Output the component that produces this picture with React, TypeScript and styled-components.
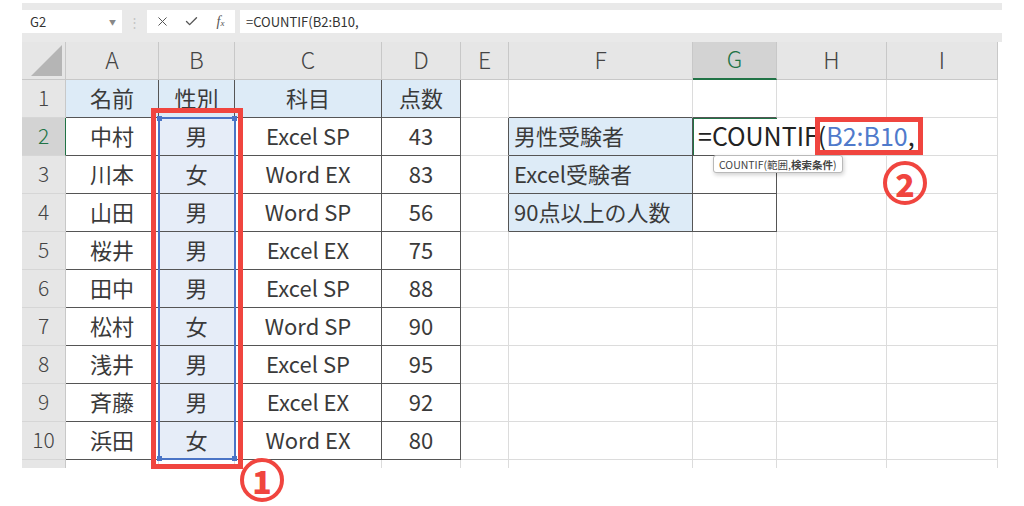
import React from "react"
import styled, { createGlobalStyle } from "styled-components"
import { X, Check } from "lucide-react"

const GlobalStyle = createGlobalStyle`
  body {
    margin: 0;
    background: #fff;
    font-family: "Noto Sans CJK JP", "Noto Sans", sans-serif;
  }
`

const COLS = [44, 93, 76, 147, 79, 48, 184, 84, 110, 111]
const LETTERS = ["A", "B", "C", "D", "E", "F", "G", "H", "I"]
const BLUE = "#ddebf7"
const SELECT = "#e6edf8"
const GREEN = "#217346"
const RED = "#f0453f"

// data[row][col], col 1 = A
const data: Record<number, Record<number, string>> = {
  1: { 1: "名前", 2: "性別", 3: "科目", 4: "点数" },
  2: { 1: "中村", 2: "男", 3: "Excel SP", 4: "43", 6: "男性受験者" },
  3: { 1: "川本", 2: "女", 3: "Word EX", 4: "83", 6: "Excel受験者" },
  4: { 1: "山田", 2: "男", 3: "Word SP", 4: "56", 6: "90点以上の人数" },
  5: { 1: "桜井", 2: "男", 3: "Excel EX", 4: "75" },
  6: { 1: "田中", 2: "男", 3: "Excel SP", 4: "88" },
  7: { 1: "松村", 2: "女", 3: "Word SP", 4: "90" },
  8: { 1: "浅井", 2: "男", 3: "Excel SP", 4: "95" },
  9: { 1: "斉藤", 2: "男", 3: "Excel EX", 4: "92" },
  10: { 1: "浜田", 2: "女", 3: "Word EX", 4: "80" },
}

const inTable = (r: number, c: number) =>
  (r >= 1 && r <= 10 && c >= 1 && c <= 4) || (r >= 2 && r <= 4 && c >= 6 && c <= 7)

const fillOf = (r: number, c: number) => {
  if (r === 1 && c >= 1 && c <= 4) return BLUE
  if (c === 6 && r >= 2 && r <= 4) return BLUE
  if (c === 2 && r >= 2 && r <= 10) return SELECT
  return "transparent"
}

const Page = styled.div`
  padding: 3px 0 0 22px;
  width: 1002px;
  min-height: 506px;
  box-sizing: border-box;
`

const FormulaBar = styled.div`
  display: flex;
  align-items: flex-start;
  width: 980px;
  height: 39px;
  padding-top: 7px;
  box-sizing: border-box;
  background: #e9e9e9;
`

const NameBox = styled.div`
  display: flex;
  align-items: center;
  justify-content: space-between;
  width: 100px;
  height: 23px;
  padding: 0 6px 0 8px;
  box-sizing: border-box;
  background: #fff;
  font-size: 13px;
  color: #333;
`

const Caret = styled.span`
  font-size: 7px;
  color: #888;
`

const Dots = styled.div`
  width: 25px;
  height: 23px;
  display: flex;
  align-items: center;
  justify-content: center;
  color: #c4c4c4;
  font-size: 13px;
`

const FuncBox = styled.div`
  display: flex;
  width: 88px;
  height: 23px;
  padding-left: 1px;
  box-sizing: border-box;
  background: #fff;
`

const IconSlot = styled.div`
  width: 29px;
  display: flex;
  align-items: center;
  justify-content: center;
  color: #555;
`

const Fx = styled.span`
  font-family: "Liberation Serif", serif;
  font-style: italic;
  font-size: 14px;
  color: #555;

  small {
    font-size: 9px;
  }
`

const FormulaInput = styled.div`
  flex: 1;
  margin-left: 5px;
  height: 23px;
  display: flex;
  align-items: center;
  padding-left: 6px;
  background: #fff;
  font-size: 13px;
  color: #333;
`

const Sheet = styled.div`
  position: relative;
  display: grid;
  width: 976px;
  grid-template-columns: ${COLS.map((w) => `${w}px`).join(" ")};
  grid-template-rows: 38px repeat(10, 38px) 8px;
  background: #fff;
`

const Corner = styled.div`
  position: relative;
  background: #e6e6e6;
  border-right: 1px solid #c8c8c8;
  border-bottom: 1px solid #c8c8c8;

  &::after {
    content: "";
    position: absolute;
    right: 3px;
    bottom: 3px;
    width: 0;
    height: 0;
    border-left: 31px solid transparent;
    border-bottom: 31px solid #b5b5b5;
  }
`

const ColHeader = styled.div<{ $active?: boolean }>`
  display: flex;
  align-items: center;
  justify-content: center;
  box-sizing: border-box;
  padding-bottom: 4px;
  background: ${(p) => (p.$active ? "#d3d3d3" : "#e6e6e6")};
  color: ${(p) => (p.$active ? GREEN : "#444")};
  border-right: 1px solid #c8c8c8;
  border-bottom: ${(p) => (p.$active ? `2px solid ${GREEN}` : "1px solid #c8c8c8")};
  font-size: 23px;
  font-weight: 300;
`

const RowHeader = styled.div<{ $active?: boolean; $last?: boolean }>`
  display: flex;
  align-items: center;
  justify-content: center;
  box-sizing: border-box;
  padding-bottom: ${(p) => (p.$last ? "0" : "3px")};
  background: ${(p) => (p.$active ? "#d3d3d3" : "#e6e6e6")};
  color: ${(p) => (p.$active ? GREEN : "#444")};
  border-right: ${(p) => (p.$active ? `1px solid ${GREEN}` : "1px solid #c8c8c8")};
  border-bottom: ${(p) => (p.$last ? "none" : "1px solid #d6d6d6")};
  font-size: 21px;
  font-weight: 300;
`

const Cell = styled.div<{
  $fill: string
  $right: string
  $bottom: string
  $left?: boolean
  $active?: boolean
}>`
  display: flex;
  align-items: center;
  justify-content: ${(p) => (p.$left ? "flex-start" : "center")};
  padding-left: ${(p) => (p.$left ? "5px" : "0")};
  padding-bottom: 4px;
  box-sizing: border-box;
  background: ${(p) => p.$fill};
  border-right: ${(p) => (p.$right === "none" ? "none" : `1px solid ${p.$right}`)};
  border-bottom: ${(p) => (p.$bottom === "none" ? "none" : `1px solid ${p.$bottom}`)};
  box-shadow: ${(p) => (p.$active ? `inset 1px 1px 0 ${GREEN}` : "none")};
  font-size: 22px;
  color: #3a3a3a;
  white-space: nowrap;
  overflow: visible;
  z-index: ${(p) => (p.$active ? 1 : 0)};
`

const Formula = styled.span`
  font-size: 25px;
  color: #222;
`

const Ref = styled.span`
  color: #4f7acb;
`

const Frame = styled.div<{ $x: number; $y: number; $w: number; $h: number }>`
  position: absolute;
  left: ${(p) => p.$x}px;
  top: ${(p) => p.$y}px;
  width: ${(p) => p.$w}px;
  height: ${(p) => p.$h}px;
  box-sizing: border-box;
  pointer-events: none;
  z-index: 3;
`

const RedFrame = styled(Frame)`
  border: 5px solid ${RED};
`

const Selection = styled(Frame)`
  border: 2px solid #4a74c6;
  z-index: 2;
`

const Handle = styled.span<{ $corner: "tl" | "tr" | "bl" | "br" }>`
  position: absolute;
  width: 5px;
  height: 5px;
  background: #4a74c6;
  ${(p) => (p.$corner[0] === "t" ? "top: -3px;" : "bottom: -3px;")}
  ${(p) => (p.$corner[1] === "l" ? "left: -3px;" : "right: -3px;")}
`

const Tooltip = styled.div`
  position: absolute;
  left: 691px;
  top: 113px;
  height: 16px;
  padding: 0 5px;
  display: flex;
  align-items: center;
  background: #fff;
  border: 1px solid #b9b9b9;
  border-radius: 3px;
  box-shadow: 1px 2px 4px rgba(0, 0, 0, 0.18);
  font-size: 10.5px;
  color: #444;
  white-space: nowrap;
  z-index: 2;

  b {
    font-weight: 700;
  }
`

const Badge = styled.span<{ $x: number; $y: number }>`
  position: absolute;
  left: ${(p) => p.$x}px;
  top: ${(p) => p.$y}px;
  transform: translate(-50%, -50%);
  width: 44px;
  height: 44px;
  box-sizing: border-box;
  border: 4.5px solid ${RED};
  border-radius: 50%;
  display: flex;
  align-items: center;
  justify-content: center;
  color: ${RED};
  font-size: 32px;
  font-weight: 900;
  line-height: 1;
  z-index: 3;
`

function renderCell(r: number, c: number) {
  const text = data[r]?.[c] ?? ""
  const last = r === 11
  let right = inTable(r, c) || inTable(r, c + 1) ? "#555" : "#dcdcdc"
  let bottom = inTable(r, c) || inTable(r + 1, c) ? "#555" : "#dcdcdc"
  if (last) bottom = "none"
  // the formula in G2 spills over G2 and H2, so their right lines are hidden
  if (r === 2 && (c === 7 || c === 8)) right = "none"
  const active = r === 2 && c === 7

  return (
    <Cell
      key={`${r}-${c}`}
      $fill={fillOf(r, c)}
      $right={right}
      $bottom={bottom}
      $left={c === 6 || active}
      $active={active}
    >
      {active ? (
        <Formula>
          =COUNTIF(<Ref>B2:B10</Ref>,
        </Formula>
      ) : (
        text
      )}
    </Cell>
  )
}

export default function App() {
  const rows = Array.from({ length: 11 }, (_, i) => i + 1)

  return (
    <>
      <GlobalStyle />
      <Page>
        <FormulaBar>
          <NameBox>
            G2<Caret>▼</Caret>
          </NameBox>
          <Dots>⋮</Dots>
          <FuncBox>
            <IconSlot>
              <X size={15} strokeWidth={1.6} />
            </IconSlot>
            <IconSlot>
              <Check size={15} strokeWidth={2.2} />
            </IconSlot>
            <IconSlot>
              <Fx>
                f<small>x</small>
              </Fx>
            </IconSlot>
          </FuncBox>
          <FormulaInput>=COUNTIF(B2:B10,</FormulaInput>
        </FormulaBar>

        <Sheet>
          <Corner />
          {LETTERS.map((l) => (
            <ColHeader key={l} $active={l === "G"}>
              {l}
            </ColHeader>
          ))}

          {rows.map((r) => (
            <React.Fragment key={r}>
              <RowHeader $active={r === 2} $last={r === 11}>
                {r <= 10 ? r : ""}
              </RowHeader>
              {LETTERS.map((_, i) => renderCell(r, i + 1))}
            </React.Fragment>
          ))}

          <Selection $x={136} $y={75} $w={78} $h={343}>
            <Handle $corner="tl" />
            <Handle $corner="tr" />
            <Handle $corner="bl" />
            <Handle $corner="br" />
          </Selection>
          <RedFrame $x={129} $y={66} $w={92} $h={361} />
          <RedFrame $x={793} $y={75} $w={108} $h={38} />

          <Tooltip>
            COUNTIF(範囲, <b>検索条件</b>)
          </Tooltip>

          <Badge $x={240} $y={438}>1</Badge>
          <Badge $x={883} $y={141}>2</Badge>
        </Sheet>
      </Page>
    </>
  )
}
